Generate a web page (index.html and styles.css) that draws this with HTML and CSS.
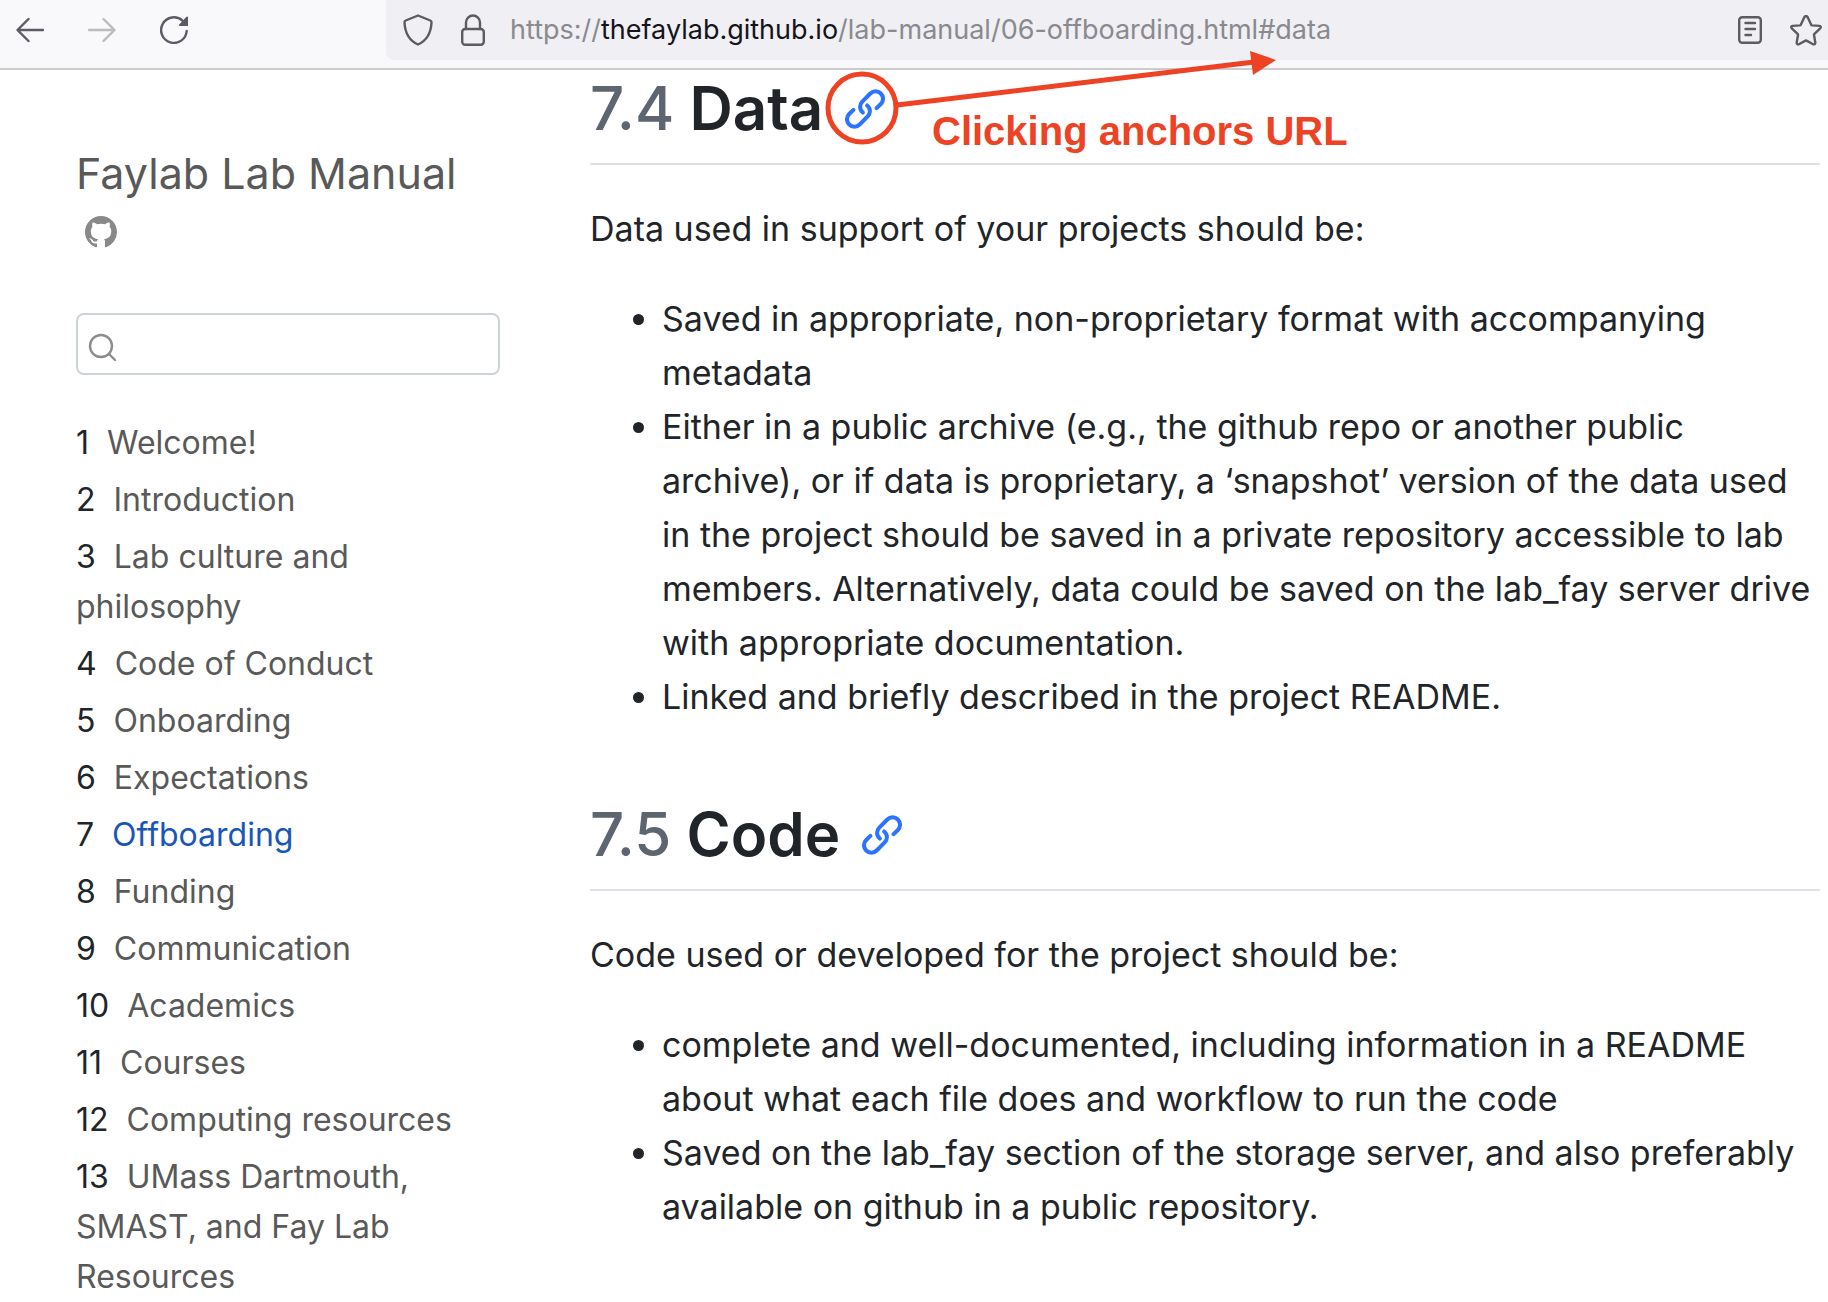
FILE: index.html
```html
<!DOCTYPE html>
<html lang="en">
<head>
<meta charset="utf-8">
<meta name="viewport" content="width=device-width, initial-scale=1">
<title>Faylab Lab Manual</title>
<link rel="stylesheet" href="styles.css">
</head>
<body>
<svg class="sprite" aria-hidden="true">
  <symbol id="chain" viewBox="0 0 119 119">
    <path d="M25 62 L12.4 74.4 A22 22 0 0 0 43.6 105.6 L67.6 81.6 A22 22 0 0 0 66 49 M94 57 L106.6 44.6 A22 22 0 0 0 75.4 13.4 L51.4 37.4 A22 22 0 0 0 53 70" fill="none" stroke="currentColor" stroke-width="12" stroke-linecap="round"/>
  </symbol>
</svg>

<header class="toolbar">
  <div class="toolbar-nav">
    <button class="tool" type="button" aria-label="Back">
      <svg width="28" height="26" viewBox="0 0 28 26"><path d="M27 13H2M12.500 2L1.500 13l11 11" /></svg>
    </button>
    <button class="tool" type="button" aria-label="Forward" disabled>
      <svg width="28" height="26" viewBox="0 0 28 26"><path d="M1 13h25M15.500 2l11 11-11 11" /></svg>
    </button>
    <button class="tool" type="button" aria-label="Reload">
      <svg width="28" height="28" viewBox="0 0 28 28"><path d="M26.700 15A12.800 12.800 0 1 1 22.500 4.600"/><path class="solid" d="M28 1v9h-8.200q-1.400-.4-.6-1.600l7-7.400q1-.8 1.800 0z"/></svg>
    </button>
  </div>
  <div class="urlbar">
    <svg class="glyph" width="30" height="32" viewBox="0 0 30 32"><path d="M15 1.500l12.300 5q1.300.6 1.200 2C28 18.500 24 26.500 15 30.500 6 26.500 2 18.500 1.500 8.500q-.1-1.400 1.200-2z"/></svg>
    <svg class="glyph" width="24" height="32" viewBox="0 0 24 32"><rect x="1.200" y="15" width="21.600" height="15.800" rx="3"/><path d="M5 15V8.500a7 7 0 0 1 14 0V15"/></svg>
    <div class="url">https://<span class="host">thefaylab.github.io</span>/lab-manual/06-offboarding.html#data</div>
    <button class="tool glyph" type="button" aria-label="Reader view">
      <svg width="24" height="28" viewBox="0 0 24 28"><rect x="1.200" y="1.200" width="21.600" height="25.600" rx="3"/><path d="M7.500 7h9.500M7.500 13h9.500M7.500 19h5.500"/></svg>
    </button>
    <button class="tool glyph" type="button" aria-label="Bookmark this page">
      <svg width="32" height="31" viewBox="0 0 32 31"><path d="M14.300 2.200q1.700-2.400 3.400 0l3.600 7.700q.2.400.8.500l7.300.5q2.300.5.800 2.500l-6 5.700q-.3.300-.2.900l1.300 7.500q0 2.400-2.200 1.800L16.500 25.600q-.5-.3-1 0L8.900 29.300q-2.200.6-2.200-1.800L8 20q.1-.6-.2-.9l-6-5.700q-1.500-2 .8-2.500l7.300-.5q.6-.1.800-.5z"/></svg>
    </button>
  </div>
</header>

<div class="page">
  <aside class="sidebar">
    <h1 class="book-title"><a href="#top">Faylab Lab Manual</a></h1>
    <a class="repo" href="#repo" aria-label="Source code">
      <svg width="32" height="32" viewBox="0 0 16 16"><path fill="currentColor" d="M8 0C3.580 0 0 3.580 0 8c0 3.540 2.290 6.530 5.470 7.590.4.070.55-.17.55-.38 0-.19-.01-.82-.01-1.490-2.010.37-2.530-.49-2.690-.94-.09-.23-.48-.94-.82-1.130-.28-.15-.68-.52-.01-.53.63-.01 1.080.58 1.230.82.72 1.210 1.870.87 2.330.66.070-.52.28-.87.51-1.070-1.780-.2-3.640-.89-3.640-3.950 0-.87.31-1.590.82-2.150-.08-.2-.36-1.020.08-2.120 0 0 .67-.21 2.200.82.64-.18 1.320-.27 2-.27s1.360.09 2 .27c1.530-1.040 2.200-.82 2.200-.82.44 1.100.16 1.920.08 2.120.51.56.82 1.270.82 2.150 0 3.070-1.870 3.750-3.650 3.950.29.25.54.73.54 1.480 0 1.070-.01 1.930-.01 2.200 0 .21.15.46.55.38A8.010 8.010 0 0 0 16 8c0-4.420-3.580-8-8-8z"/></svg>
    </a>
    <label class="search">
      <svg width="28" height="28" viewBox="0 0 28 28" aria-hidden="true"><circle cx="13" cy="13" r="11"/><path d="M21 21l6 6"/></svg>
      <input type="search" aria-label="Search">
    </label>
    <nav>
      <ul class="chapters">
        <li><span class="num">1</span><a href="#c1">Welcome!</a></li>
        <li><span class="num">2</span><a href="#c2">Introduction</a></li>
        <li><span class="num">3</span><a href="#c3">Lab culture and philosophy</a></li>
        <li><span class="num">4</span><a href="#c4">Code of Conduct</a></li>
        <li><span class="num">5</span><a href="#c5">Onboarding</a></li>
        <li><span class="num">6</span><a href="#c6">Expectations</a></li>
        <li><span class="num">7</span><a class="current" href="#c7">Offboarding</a></li>
        <li><span class="num">8</span><a href="#c8">Funding</a></li>
        <li><span class="num">9</span><a href="#c9">Communication</a></li>
        <li><span class="num">10</span><a href="#c10">Academics</a></li>
        <li><span class="num">11</span><a href="#c11">Courses</a></li>
        <li><span class="num">12</span><a href="#c12">Computing resources</a></li>
        <li><span class="num">13</span><a href="#c13">UMass Dartmouth, SMAST, and Fay Lab Resources</a></li>
      </ul>
    </nav>
  </aside>

  <main class="content">
    <section id="data">
      <h2><span><span class="section-num">7.4</span> Data</span><a class="anchor" href="#data" aria-label="Link to Data"><svg width="40" height="40"><use href="#chain"/></svg></a></h2>
      <p>Data used in support of your projects should be:</p>
      <ul>
        <li>Saved in appropriate, non-proprietary format with accompanying metadata</li>
        <li>Either in a public archive (e.g., the github repo or another public archive), or if data is proprietary, a ‘snapshot’ version of the data used in the project should be saved in a private repository accessible to lab members. Alternatively, data could be saved on the lab_fay server drive with appropriate documentation.</li>
        <li>Linked and briefly described in the project README.</li>
      </ul>
    </section>
    <section id="code">
      <h2><span><span class="section-num">7.5</span> Code</span><a class="anchor" href="#code" aria-label="Link to Code"><svg width="40" height="40"><use href="#chain"/></svg></a></h2>
      <p>Code used or developed for the project should be:</p>
      <ul>
        <li>complete and well-documented, including information in a README about what each file does and workflow to run the code</li>
        <li>Saved on the lab_fay section of the storage server, and also preferably available on github in a public repository.</li>
      </ul>
    </section>
  </main>
</div>

<div class="callout">
  <svg width="460" height="110" viewBox="0 0 460 110" aria-hidden="true">
    <circle cx="42" cy="68" r="34" fill="none" stroke="currentColor" stroke-width="5"/>
    <path d="M77 65L434 22" stroke="currentColor" stroke-width="5"/>
    <path d="M430 11l26 9-23 15z" fill="currentColor"/>
  </svg>
  <span class="callout-text">Clicking anchors URL</span>
</div>
</body>
</html>
```
FILE: styles.css
```css
* { box-sizing: border-box; }

body {
  margin: 0;
  position: relative;
  background: #fff;
  color: #212529;
  font-family: Inter, "Liberation Sans", sans-serif;
  font-size: 34px;
  line-height: 54px;
  overflow-x: hidden;
}

a { color: inherit; text-decoration: none; }
ul { margin: 0; padding: 0; }
svg { display: block; }
.sprite { display: none; }

/* Browser toolbar */
.toolbar {
  display: flex;
  align-items: flex-start;
  height: 70px;
  background: #f9f9fb;
  border-bottom: 2px solid #cccccc;
}

.toolbar-nav {
  display: flex;
  flex: 0 0 386px;
  align-items: center;
  gap: 44px;
  height: 60px;
  padding-left: 16px;
}

.tool {
  padding: 0;
  border: 0;
  background: none;
  color: #5b5b66;
}

.tool:disabled { color: #bbbbbd; }

.tool svg,
.glyph {
  fill: none;
  stroke: currentColor;
  stroke-width: 2.4;
  stroke-linecap: round;
  stroke-linejoin: round;
}

.tool .solid { fill: currentColor; stroke: none; }

.urlbar {
  display: flex;
  flex: 1;
  align-items: center;
  height: 60px;
  padding: 0 6px 0 17px;
  background: #f0eff4;
  border-radius: 0 0 0 8px;
}

.urlbar .glyph { flex: none; color: #5b5b60; margin-right: 28px; }
.urlbar .glyph:last-child { margin-right: 0; }

.url {
  flex: 1;
  margin-left: -3px;
  overflow: hidden;
  color: #8a8a8e;
  font-size: 27px;
  white-space: nowrap;
}

.host { color: #15141a; }

/* Page */
.page {
  display: grid;
  grid-template-columns: 424px minmax(0, 1fr);
  column-gap: 90px;
  padding: 0 8px 0 76px;
}

.sidebar { padding-top: 71px; color: #212529; }

.book-title {
  margin: 0;
  color: #595959;
  font-size: 43px;
  font-weight: 400;
  line-height: 64px;
  white-space: nowrap;
}

.repo { display: block; width: 32px; margin: 11px 0 65px 9px; color: #898989; }

.search {
  display: flex;
  align-items: center;
  gap: 8px;
  height: 62px;
  padding: 6px 10px 0;
  border: 2px solid #ced4da;
  border-radius: 8px;
}

.search svg {
  flex: none;
  fill: none;
  stroke: #8c8c8c;
  stroke-width: 2.4;
  stroke-linecap: round;
}

.search input {
  flex: 1;
  min-width: 0;
  border: 0;
  outline: 0;
  background: none;
  font: inherit;
}

.chapters {
  display: flex;
  flex-direction: column;
  gap: 7px;
  margin-top: 43px;
  list-style: none;
  font-size: 32px;
  line-height: 50px;
}

.chapters li { padding-right: 30px; }
.chapters a { color: #595959; }
.chapters .current { color: #1a56b8; }
.num { margin-right: 18px; }

.content h2 {
  display: flex;
  align-items: center;
  gap: 22px;
  margin: 0;
  padding-bottom: 16px;
  border-bottom: 2px solid #dee2e6;
  font-size: 60px;
  font-weight: 600;
  line-height: 77px;
}

.section-num { color: #5c6570; }
.anchor { color: #2c73ff; }
.content p { margin: 37px 0 36px; }
.content ul { padding-left: 72px; }
.content section + section h2 { margin-top: 72px; }
.section-num { font-weight: 500; }

/* Hand-drawn note over the page */
.callout {
  position: absolute;
  top: 40px;
  left: 820px;
  color: #ee4224;
  pointer-events: none;
}

.callout-text {
  position: absolute;
  top: 64px;
  left: 112px;
  font: bold 40px/54px "Liberation Sans", Arial, sans-serif;
  white-space: nowrap;
}
```
